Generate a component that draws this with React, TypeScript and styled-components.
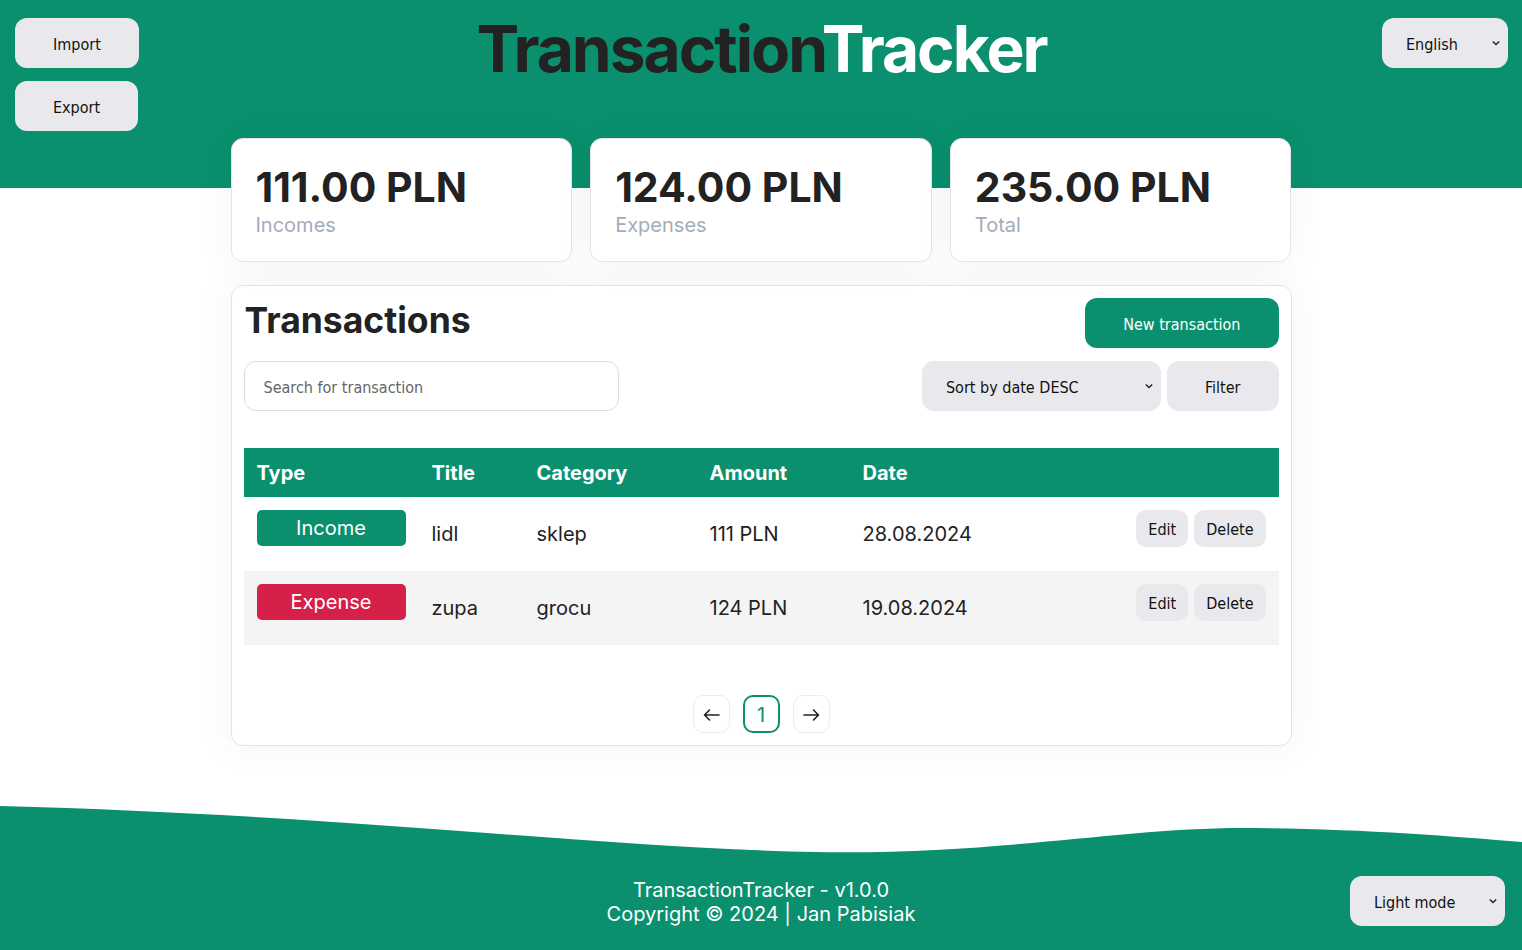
import React from 'react';
import styled, { createGlobalStyle } from 'styled-components';

const GREEN = '#0a906e';
const BTN_BG = '#e9e9ed';
const UI_FONT = `"DejaVu Sans Condensed", "DejaVu Sans", sans-serif`;

const GlobalStyle = createGlobalStyle`
  html, body { margin: 0; padding: 0; }
  body { font-family: Inter, "Noto Sans", sans-serif; color: #222; background: #fff; }
  * { box-sizing: border-box; }
`;

const Page = styled.div`
  min-height: 100vh;
  display: flex;
  flex-direction: column;
  background: linear-gradient(to bottom, ${GREEN} 0, ${GREEN} 188px, #fff 188px);
`;

const TopBar = styled.header`
  display: grid;
  grid-template-columns: 1fr auto 1fr;
  align-items: start;
  padding: 18px 14px 0 15px;
`;

const SideActions = styled.div`
  display: flex;
  flex-direction: column;
  align-items: flex-start;
  gap: 13px;
`;

const Brand = styled.h1`
  margin: -8px 0 0;
  font-size: 64px;
  font-weight: 700;
  line-height: 1.21;
  letter-spacing: -2px;
  color: #222;
`;

const BrandAccent = styled.span`
  color: #fff;
`;

const RightSlot = styled.div`
  display: flex;
  justify-content: flex-end;
`;

const Button = styled.button<{ $primary?: boolean; $small?: boolean }>`
  font-family: ${UI_FONT};
  font-stretch: condensed;
  font-size: 16px;
  border: none;
  cursor: pointer;
  flex: none;
  height: ${(p) => (p.$small ? 37 : 50)}px;
  padding: 2px ${(p) => (p.$small ? 12 : 38)}px 0;
  border-radius: ${(p) => (p.$small ? 10 : 12)}px;
  background: ${(p) => (p.$primary ? GREEN : BTN_BG)};
  color: ${(p) => (p.$primary ? '#fff' : '#111')};
`;

const SelectWrap = styled.div<{ $w: number }>`
  position: relative;
  flex: none;
  width: ${(p) => p.$w}px;
  height: 50px;
`;

const Select = styled.select`
  appearance: none;
  width: 100%;
  height: 100%;
  border: none;
  border-radius: 12px;
  background: ${BTN_BG};
  color: #111;
  font-family: ${UI_FONT};
  font-stretch: condensed;
  font-size: 16px;
  padding: 2px 28px 0 24px;
`;

const ChevronIcon = styled.svg`
  position: absolute;
  right: 8px;
  top: 50%;
  margin-top: -4px;
  pointer-events: none;
`;

const Chevron = () => (
  <ChevronIcon width="8" height="8" viewBox="0 0 8 8">
    <path d="M0.8 2.4 L4 5.6 L7.2 2.4" fill="none" stroke="#222" strokeWidth="1.4" />
  </ChevronIcon>
);

const Content = styled.main`
  width: 1061px;
  margin: 7px auto 0;
`;

const StatGrid = styled.section`
  display: grid;
  grid-template-columns: repeat(3, 1fr);
  gap: 18px;
`;

const Panel = styled.div`
  background: #fff;
  border: 1px solid #e4e4e4;
  border-radius: 12px;
  box-shadow: 0 0 40px rgba(0, 0, 0, 0.05);
`;

const StatCard = styled(Panel)`
  padding: 23px 24px 24px;
`;

const StatValue = styled.div`
  font-size: 41px;
  font-weight: 700;
  line-height: 51px;
  color: #222;
`;

const StatLabel = styled.div`
  font-size: 20px;
  line-height: 24px;
  color: #a3acbb;
`;

const TxPanel = styled(Panel)`
  margin-top: 23px;
  padding: 12px;
`;

const PanelHeader = styled.div`
  display: flex;
  justify-content: space-between;
  align-items: flex-start;
`;

const PanelTitle = styled.h2`
  margin: 1px 0 0 1px;
  font-size: 35.5px;
  font-weight: 700;
  line-height: 43px;
  color: #222;
`;

const Controls = styled.div`
  margin-top: 13px;
  display: flex;
  justify-content: space-between;
`;

const ControlGroup = styled.div`
  display: flex;
  gap: 6px;
`;

const Search = styled.input`
  width: 375px;
  height: 50px;
  border: 1px solid #dcdcdc;
  border-radius: 12px;
  padding: 2px 19px 0;
  font-family: ${UI_FONT};
  font-stretch: condensed;
  font-size: 16px;
  color: #222;
  &::placeholder {
    color: #666;
  }
`;

const Table = styled.table`
  margin-top: 37px;
  width: 100%;
  border-collapse: collapse;
  table-layout: fixed;
`;

const HeadRow = styled.tr`
  background: ${GREEN};
  height: 49px;
`;

const Th = styled.th`
  padding: 1px 13px 0;
  text-align: left;
  color: #fff;
  font-size: 20px;
  font-weight: 700;
`;

const Row = styled.tr<{ $alt?: boolean }>`
  height: 74px;
  background: ${(p) => (p.$alt ? '#f4f4f4' : '#fff')};
`;

const Td = styled.td<{ $top?: boolean }>`
  padding: ${(p) => (p.$top ? '13px 13px 0' : '0 13px')};
  vertical-align: ${(p) => (p.$top ? 'top' : 'middle')};
  font-size: 20px;
  color: #222;
`;

const Badge = styled.div<{ $kind: 'income' | 'expense' }>`
  width: 149px;
  height: 36px;
  line-height: 36px;
  border-radius: 5px;
  text-align: center;
  color: #fff;
  font-size: 20px;
  background: ${(p) => (p.$kind === 'income' ? GREEN : '#d5204a')};
`;

const RowActions = styled.div`
  display: flex;
  justify-content: flex-end;
  gap: 6px;
`;

const Pager = styled.nav`
  margin-top: 50px;
  display: flex;
  justify-content: center;
  gap: 13px;
`;

const PageBtn = styled.button<{ $active?: boolean }>`
  width: 37px;
  height: 38px;
  border-radius: 10px;
  background: #fff;
  border: ${(p) => (p.$active ? `2px solid ${GREEN}` : '1px solid #ececec')};
  color: ${GREEN};
  font-family: Inter, sans-serif;
  font-size: 20px;
  padding: 1px 0 0;
  display: flex;
  align-items: center;
  justify-content: center;
  cursor: pointer;
`;

const Arrow = ({ dir }: { dir: 'left' | 'right' }) => (
  <svg width="17" height="12" viewBox="0 0 17 12" style={dir === 'right' ? { transform: 'scaleX(-1)' } : undefined}>
    <path d="M1.5 6 H16 M6.5 1 L1.5 6 L6.5 11" fill="none" stroke="#222" strokeWidth="1.6" strokeLinecap="round" strokeLinejoin="round" />
  </svg>
);

const Footer = styled.footer`
  margin-top: auto;
  padding-top: 40px;
`;

const Wave = styled.svg`
  display: block;
  width: 100%;
  height: 76px;
`;

const FooterBody = styled.div`
  background: ${GREEN};
  display: grid;
  grid-template-columns: 1fr auto 1fr;
  align-items: start;
  padding: 0 17px 24px;
`;

const FooterText = styled.div`
  grid-column: 2;
  padding-top: 2px;
  text-align: center;
  color: #fff;
  font-size: 20px;
  line-height: 24px;
`;

const FooterRight = styled.div`
  display: flex;
  justify-content: flex-end;
`;

const cols = [175, 105, 173, 153, 200];

const rows = [
  { type: 'income' as const, label: 'Income', title: 'lidl', category: 'sklep', amount: '111 PLN', date: '28.08.2024' },
  { type: 'expense' as const, label: 'Expense', title: 'zupa', category: 'grocu', amount: '124 PLN', date: '19.08.2024' },
];

export default function App() {
  return (
    <Page>
      <GlobalStyle />
      <TopBar>
        <SideActions>
          <Button>Import</Button>
          <Button>Export</Button>
        </SideActions>
        <Brand>
          Transaction<BrandAccent>Tracker</BrandAccent>
        </Brand>
        <RightSlot>
          <SelectWrap $w={126}>
            <Select defaultValue="en">
              <option value="en">English</option>
              <option value="pl">Polski</option>
            </Select>
            <Chevron />
          </SelectWrap>
        </RightSlot>
      </TopBar>

      <Content>
        <StatGrid>
          <StatCard>
            <StatValue>111.00 PLN</StatValue>
            <StatLabel>Incomes</StatLabel>
          </StatCard>
          <StatCard>
            <StatValue>124.00 PLN</StatValue>
            <StatLabel>Expenses</StatLabel>
          </StatCard>
          <StatCard>
            <StatValue>235.00 PLN</StatValue>
            <StatLabel>Total</StatLabel>
          </StatCard>
        </StatGrid>

        <TxPanel>
          <PanelHeader>
            <PanelTitle>Transactions</PanelTitle>
            <Button $primary>New transaction</Button>
          </PanelHeader>
          <Controls>
            <Search placeholder="Search for transaction" />
            <ControlGroup>
              <SelectWrap $w={239}>
                <Select defaultValue="date-desc">
                  <option value="date-desc">Sort by date DESC</option>
                  <option value="date-asc">Sort by date ASC</option>
                </Select>
                <Chevron />
              </SelectWrap>
              <Button>Filter</Button>
            </ControlGroup>
          </Controls>

          <Table>
            <colgroup>
              {cols.map((w, i) => (
                <col key={i} style={{ width: w }} />
              ))}
              <col />
            </colgroup>
            <thead>
              <HeadRow>
                <Th>Type</Th>
                <Th>Title</Th>
                <Th>Category</Th>
                <Th>Amount</Th>
                <Th>Date</Th>
                <Th />
              </HeadRow>
            </thead>
            <tbody>
              {rows.map((r, i) => (
                <Row key={i} $alt={i % 2 === 1}>
                  <Td $top>
                    <Badge $kind={r.type}>{r.label}</Badge>
                  </Td>
                  <Td>{r.title}</Td>
                  <Td>{r.category}</Td>
                  <Td>{r.amount}</Td>
                  <Td>{r.date}</Td>
                  <Td $top>
                    <RowActions>
                      <Button $small>Edit</Button>
                      <Button $small>Delete</Button>
                    </RowActions>
                  </Td>
                </Row>
              ))}
            </tbody>
          </Table>

          <Pager>
            <PageBtn aria-label="Previous page">
              <Arrow dir="left" />
            </PageBtn>
            <PageBtn $active>1</PageBtn>
            <PageBtn aria-label="Next page">
              <Arrow dir="right" />
            </PageBtn>
          </Pager>
        </TxPanel>
      </Content>

      <Footer>
        <Wave viewBox="0 0 1522 76" preserveAspectRatio="none">
          <path
            d="M0 6 C350 15 600 48 815 52 C1000 55 1120 28 1243 28 C1350 28 1450 36 1522 42 L1522 76 L0 76 Z"
            fill={GREEN}
          />
        </Wave>
        <FooterBody>
          <FooterText>
            TransactionTracker - v1.0.0
            <br />
            Copyright © 2024 | Jan Pabisiak
          </FooterText>
          <FooterRight>
            <SelectWrap $w={155}>
              <Select defaultValue="light">
                <option value="light">Light mode</option>
                <option value="dark">Dark mode</option>
              </Select>
              <Chevron />
            </SelectWrap>
          </FooterRight>
        </FooterBody>
      </Footer>
    </Page>
  );
}
